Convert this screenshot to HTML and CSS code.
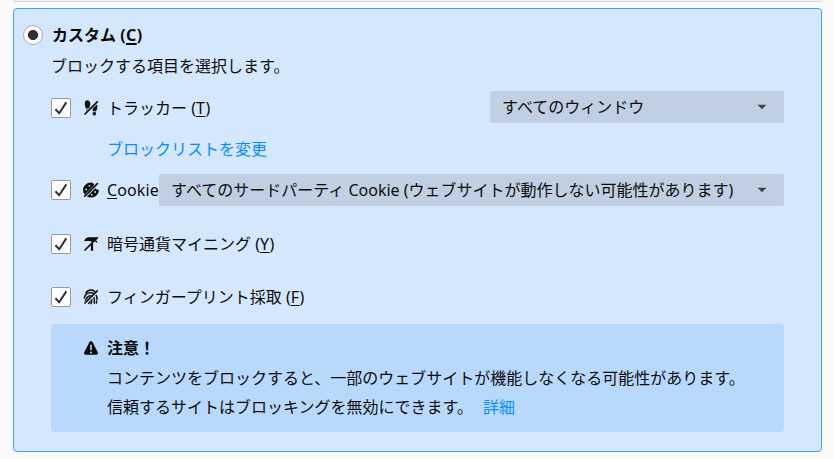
FILE: index.html
```html
<!DOCTYPE html>
<html lang="ja">
<head>
<meta charset="utf-8">
<title>カスタム</title>
<link rel="stylesheet" href="styles.css">
</head>
<body>
<svg class="defs" aria-hidden="true">
  <symbol id="check" viewBox="0 0 20 20"><path d="M4.4 11.2 8.2 15.2 15.3 4.4" fill="none" stroke="#2e3033" stroke-width="2"/></symbol>
  <symbol id="arrow" viewBox="0 0 10 6"><path d="M.5 .7h9L5 5.3z" fill="#3d444a"/></symbol>
</svg>
<div class="previous"></div>
<main class="card">
  <label class="heading"><span class="radio"></span><strong>カスタム <span class="key">(<u>C</u>)</span></strong></label>
  <p class="intro">ブロックする項目を選択します。</p>
  <div class="row tracker">
    <span class="box"><svg><use href="#check"/></svg></span>
    <svg class="icon" viewBox="0 0 16 16"><path d="M1.8 3C2 1.2 3.1.2 4.4.3 6.5.5 7.6 2.4 7.3 4.6L6.2 8.4H2.9C2.2 6.5 1.6 4.6 1.8 3zM3.1 9.4H6L5.5 12H3.3zM14.3 6C14.1 4.2 12.9 3.4 11.6 3.6 9.9 4 9.1 6 9.4 7.8l.5 3.4h3.2c.7-1.6 1.4-3.5 1.2-5.2zM9.6 12.2H13c0 2.2-.2 3.3-1.7 3.3s-1.6-1.2-1.7-3.3z"/><path d="M2 14.2 14.4 1.8" class="gap"/><path d="M2 14 14.2 1.8" class="slash"/></svg>
    <span>トラッカー (<u class="wide">T</u>)</span>
    <div class="select short"><span>すべてのウィンドウ</span><svg><use href="#arrow"/></svg></div>
  </div>
  <a class="change">ブロックリストを変更</a>
  <div class="row cookie">
    <span class="box"><svg><use href="#check"/></svg></span>
    <svg class="icon" viewBox="0 0 16 16"><path d="M8.5.4C4 .2.1 3.5.1 8c0 4.4 3.5 7.5 7.8 7.5 4.2 0 7.7-2.8 8-7.3L13 7 11.5 5 10.8 1.8z"/><g class="hole"><circle cx="6.4" cy="3.8" r=".9"/><circle cx="3.2" cy="7.5" r=".9"/><circle cx="8.8" cy="12.8" r=".9"/><circle cx="12.2" cy="10" r=".9"/></g><path d="M2 14.4 15 1.4" class="gap"/><path d="M1.8 14.2 14.4 1.6" class="slash"/></svg>
    <span class="cookie-label"><u>C</u>ookie</span>
    <div class="select long"><span>すべてのサードパーティ Cookie (ウェブサイトが動作しない可能性があります)</span><svg><use href="#arrow"/></svg></div>
  </div>
  <div class="row mining">
    <span class="box"><svg><use href="#check"/></svg></span>
    <svg class="icon" viewBox="0 0 16 16"><path d="M1 5.4C2 2.8 3.7 1.2 6 1.2h8.6v1.2L10.4 6.2 7.5 5.2C5 4.8 3 4.8 1 5.4zM8 8.8 10 7.2l.2 7.6H7.8zM11.8 5.6l2-1.2.7 2.6z"/><path d="M2 14 14.2 1.8" class="slash"/></svg>
    <span>暗号通貨マイニング (<u class="wide">Y</u>)</span>
  </div>
  <div class="row finger">
    <span class="box"><svg><use href="#check"/></svg></span>
    <svg class="icon" viewBox="0 0 16 16"><g fill="none" stroke="#0c0c0d" stroke-width="1.5"><path d="M2.6 4C5-.1 11-.2 13.3 4M1.4 9.8C1.5 5.6 4.2 3.7 7.8 3.7c4.4 0 6.7 3 6.2 7.2M2 12.3c2-2 1-5.6 5.8-5.6 3.5 0 4 3 3.3 8M5.3 14.9C7.5 12 6.8 9.6 8 9.6c1.2.3.8 3.1-.2 5.6M13.8 11.5l-.6 3.2"/></g><path d="M2.2 14.4 14.4 2.2" class="gap"/><path d="M2 14 14.2 1.8" class="slash"/></svg>
    <span>フィンガープリント採取 (<u class="wide">F</u>)</span>
  </div>
  <section class="notice">
    <div class="notice-title"><svg class="icon" viewBox="0 0 16 16"><path d="M8 1.2c.8 0 1.2.4 1.6 1.1l5 9.8c.8 1.6.1 2.7-1.4 2.7H2.8c-1.5 0-2.2-1.1-1.4-2.7l5-9.8C6.8 1.6 7.2 1.2 8 1.2z"/><path d="M8 5.4v4.2" stroke="#b9d9fc" stroke-width="1.6" stroke-linecap="round"/><circle cx="8" cy="12.4" r="1" fill="#b9d9fc"/></svg><strong>注意！</strong></div>
    <p>コンテンツをブロックすると、一部のウェブサイトが機能しなくなる可能性があります。</p>
    <p>信頼するサイトはブロッキングを無効にできます。<a class="details">詳細</a></p>
  </section>
</main>
</body>
</html>
```
FILE: styles.css
```css
* { box-sizing: border-box; }
body {
  margin: 0;
  height: 459px;
  overflow: hidden;
  background: #f9f9fa;
  color: #0c0c0d;
  font: 16px/24px "Noto Sans", "Noto Sans CJK JP", sans-serif;
}
p { margin: 0; }
u { text-underline-offset: 2px; text-decoration-thickness: 1px; text-decoration-skip-ink: none; }
.wide { letter-spacing: .5px; }
.defs { position: absolute; width: 0; height: 0; }
.previous {
  height: 2px;
  margin: 0 12px 6px 13px;
  border: 1px solid #d7d7db;
  border-top: 0;
  border-radius: 0 0 4px 4px;
  background: #f2f2f4;
}
.card {
  width: 809px;
  height: 444px;
  margin-left: 13px;
  padding: 14px 37px 0;
  border: 1px solid #45a1ff;
  border-radius: 4px;
  background: #d5e7fc;
}
.heading { display: flex; align-items: center; height: 24px; margin-left: -28px; }
.heading u { text-decoration-thickness: 2px; }
.key { letter-spacing: .4px; }
.radio {
  width: 20px;
  height: 20px;
  margin-right: 9px;
  border: 1px solid #aaa;
  border-radius: 50%;
  background: radial-gradient(circle, #2e3033 4.7px, #fff 5.3px);
}
.intro { height: 24px; margin-top: 7px; }
.row { display: flex; align-items: center; height: 32px; white-space: nowrap; }
.box { flex: none; width: 20px; height: 20px; border: 1px solid #999; border-radius: 2px; background: #fff; }
.box svg { display: block; width: 20px; height: 20px; margin: -1px; }
.icon { flex: none; width: 16px; height: 16px; margin: 0 8px 0 12px; fill: #0c0c0d; }
.gap { fill: none; stroke: #d5e7fc; stroke-width: 3; }
.slash { fill: none; stroke: #0c0c0d; stroke-width: 1.7; stroke-linecap: round; }
.hole { fill: #d5e7fc; }
.tracker { height: 34px; margin-top: 13px; }
.select {
  display: flex;
  align-items: center;
  justify-content: space-between;
  height: 32px;
  padding: 0 17px 0 12px;
  border-radius: 2px;
  background: #c0d0e2;
}
.select svg { flex: none; width: 10px; height: 6px; }
.short { align-self: flex-start; width: 294px; margin-left: auto; }
.long { width: 625px; }
a { color: #0a8cff; }
.change { display: block; width: max-content; height: 24px; margin: 12px 0 0 56px; }
.cookie { margin-top: 13px; }
.cookie-label { width: 52px; letter-spacing: .1px; }
.mining { margin-top: 22px; }
.finger { margin-top: 21px; }
.notice { height: 108px; margin-top: 11px; padding: 11px 0 0 20px; border-radius: 4px; background: #b9d9fc; }
.notice-title { display: flex; align-items: center; height: 26px; margin-bottom: 2px; }
.notice p { height: 29px; padding: 3px 0 0 36px; white-space: nowrap; }
.details { margin-left: 10px; }
```
